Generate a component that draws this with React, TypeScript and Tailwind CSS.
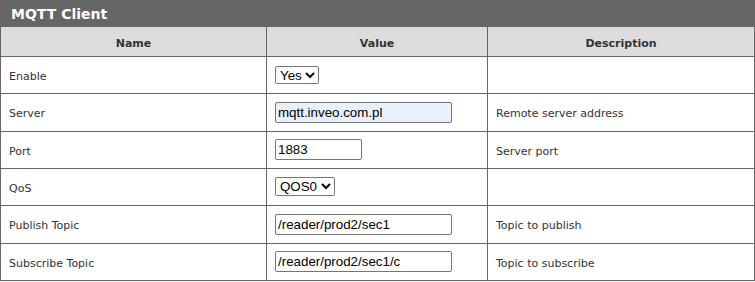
import React from "react";

type Row = {
	name: string;
	value: React.ReactNode;
	description?: string;
	h: string;
};

const inputCls =
	"h-[21px] border border-[#767676] rounded-[2px] px-[2px] text-[13.33px] text-black bg-white outline-none";

export default function App() {
	const rows: Row[] = [
		{
			name: "Enable",
			h: "h-[37px]",
			value: (
				<select
					defaultValue="Yes"
					className="h-[18px] border border-[#767676] rounded-[2px] text-[13.33px] text-black bg-white"
				>
					<option>Yes</option>
					<option>No</option>
				</select>
			),
		},
		{
			name: "Server",
			h: "h-[38px]",
			description: "Remote server address",
			value: (
				<input
					defaultValue="mqtt.inveo.com.pl"
					className={`${inputCls} w-[177px] !bg-[#e8f0fe]`}
				/>
			),
		},
		{
			name: "Port",
			h: "h-[37px]",
			description: "Server port",
			value: <input defaultValue="1883" className={`${inputCls} w-[87px]`} />,
		},
		{
			name: "QoS",
			h: "h-[37px]",
			value: (
				<select
					defaultValue="QOS0"
					className="h-[19px] border border-[#767676] rounded-[2px] text-[13.33px] text-black bg-white"
				>
					<option>QOS0</option>
					<option>QOS1</option>
					<option>QOS2</option>
				</select>
			),
		},
		{
			name: "Publish Topic",
			h: "h-[38px]",
			description: "Topic to publish",
			value: (
				<input defaultValue="/reader/prod2/sec1" className={`${inputCls} w-[177px]`} />
			),
		},
		{
			name: "Subscribe Topic",
			h: "h-[37px]",
			description: "Topic to subscribe",
			value: (
				<input defaultValue="/reader/prod2/sec1/c" className={`${inputCls} w-[177px]`} />
			),
		},
	];

	return (
		<div
			className="w-[755px] h-[282px] bg-white text-[#333]"
			style={{ fontFamily: '"DejaVu Sans", Verdana, sans-serif' }}
		>
			<div className="h-[27px] bg-[#666666] flex items-center px-[11px]">
				<h2 className="text-white font-bold text-[14px] leading-none">MQTT Client</h2>
			</div>
			<table className="w-[755px] border-collapse table-fixed text-[11px]">
				<colgroup>
					<col className="w-[266px]" />
					<col className="w-[221px]" />
					<col />
				</colgroup>
				<thead>
					<tr className="h-[29px] bg-[#dddddd]">
						<th className="border border-[#666] border-t-0 font-bold text-center pt-[5px]">
							Name
						</th>
						<th className="border border-[#666] border-t-0 font-bold text-center pt-[5px]">
							Value
						</th>
						<th className="border border-[#666] border-t-0 font-bold text-center pt-[5px]">
							Description
						</th>
					</tr>
				</thead>
				<tbody>
					{rows.map((row) => (
						<tr key={row.name} className={row.h}>
							<td className="border border-[#666] px-[8px] pt-[5px]">{row.name}</td>
							<td
								className="border border-[#666] px-[8px]"
								style={{ fontFamily: '"Liberation Sans", Arial, sans-serif' }}
							>
								<div className="flex items-center">{row.value}</div>
							</td>
							<td className="border border-[#666] px-[8px] pt-[5px]">{row.description}</td>
						</tr>
					))}
				</tbody>
			</table>
		</div>
	);
}
